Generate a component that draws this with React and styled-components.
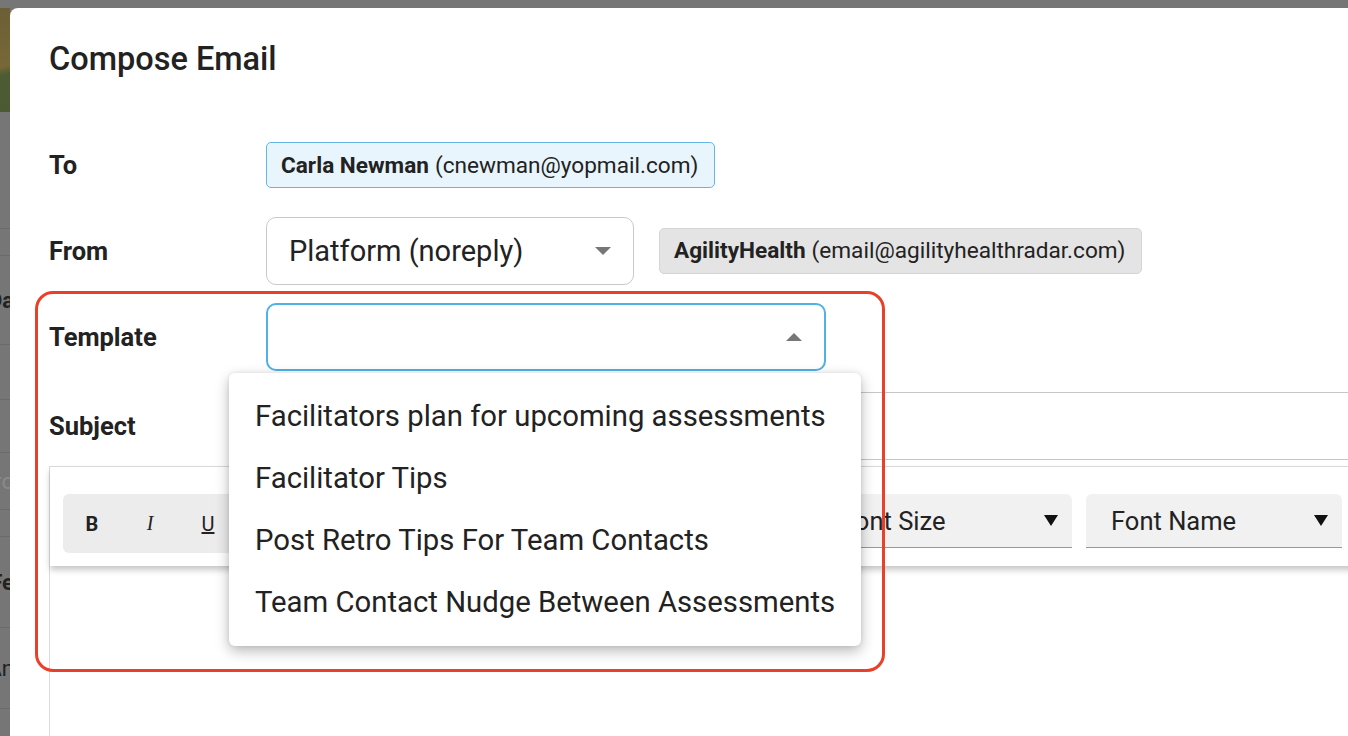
import React from 'react';
import styled, { createGlobalStyle, css } from 'styled-components';

const GlobalStyle = createGlobalStyle`
    html, body {
        margin: 0;
        padding: 0;
        height: 100%;
        overflow: hidden;
    }
    body {
        font-family: Roboto, "Noto Sans", "Liberation Sans", sans-serif;
        color: #222;
    }
`;

const Page = styled.div`
    display: flex;
    height: 736px;
    padding-top: 8px;
    box-sizing: border-box;
    background: #767676;
`;

const Backdrop = styled.div`
    width: 10px;
    flex-shrink: 0;
    overflow: hidden;
    display: flex;
    flex-direction: column;
`;

const BackdropInner = styled.div`
    width: 40px;
    margin-left: -26px;
    display: flex;
    flex-direction: column;
`;

const BackdropPhoto = styled.div`
    height: 104px;
    margin-left: 26px;
    background: linear-gradient(165deg, #6c5e36 0%, #786838 55%, #4e5c34 63%, #4a5a32 100%);
`;

const BackdropRow = styled.div`
    height: ${p => p.$h}px;
    border-bottom: 1px solid #6a6a6a;
    display: flex;
    align-items: center;
    justify-content: flex-end;
    font-size: 22px;
    font-weight: ${p => (p.$bold ? 700 : 400)};
    color: ${p => (p.$faint ? '#8a8a8a' : '#222')};
    white-space: nowrap;
`;

const Modal = styled.div`
    flex: 1;
    position: relative;
    background: #fff;
    border-top-left-radius: 8px;
    padding: 32px 0 0 39px;
    overflow: hidden;
`;

const Title = styled.h1`
    margin: 0;
    font-size: 32.5px;
    line-height: 38px;
    font-weight: 500;
    color: #222;
`;

const Form = styled.div`
    margin-top: 44px;
    display: flex;
    flex-direction: column;
`;

const Row = styled.div`
    display: flex;
    align-items: center;
    height: ${p => p.$h}px;
    margin-top: ${p => p.$mt || 0}px;
`;

const Label = styled.div`
    width: 217px;
    flex-shrink: 0;
    font-size: 25.5px;
    font-weight: 700;
    color: #222;
`;

const Field = styled.div`
    flex: 1;
    display: flex;
    align-items: center;
    gap: 25px;
    position: relative;
`;

const Chip = styled.div`
    display: inline-flex;
    align-items: center;
    height: 46px;
    box-sizing: border-box;
    padding: 0 16px 0 14px;
    border-radius: 5px;
    font-size: 22.6px;
    color: #222;
    white-space: nowrap;
    ${p => p.$tone === 'blue'
        ? css`
            background: #e8f5fc;
            border: 1px solid #63b6e6;
        `
        : css`
            background: #e4e4e4;
            border: 1px solid #d5d5d5;
        `}

    b {
        font-weight: 700;
        margin-right: 6px;
    }
`;

const Select = styled.div`
    width: ${p => p.$w}px;
    height: 68px;
    box-sizing: border-box;
    display: flex;
    align-items: center;
    justify-content: space-between;
    padding: 0 22px 0 22px;
    border-radius: 10px;
    background: #fff;
    font-size: 29px;
    color: #222;
    ${p => p.$focused
        ? css`border: 2px solid #4fb1e5;`
        : css`border: 1px solid #c9c9c9;`}
`;

const Caret = styled.span`
    width: 0;
    height: 0;
    border-left: 8px solid transparent;
    border-right: 8px solid transparent;
    ${p => p.$up
        ? css`border-bottom: 8px solid #777;`
        : css`border-top: 8px solid #777;`}
`;

const TemplateWrap = styled.div`
    position: relative;
`;

const Menu = styled.ul`
    position: absolute;
    top: calc(100% + 2px);
    left: -37px;
    width: 632px;
    margin: 0;
    padding: 12px 0 13px;
    list-style: none;
    background: #fff;
    border-radius: 6px;
    box-shadow: 0 5px 14px rgba(0, 0, 0, 0.28), 0 0 4px rgba(0, 0, 0, 0.08);
    z-index: 5;
`;

const MenuItem = styled.li`
    height: 62px;
    display: flex;
    align-items: center;
    padding-left: 26px;
    font-size: 29.3px;
    color: #222;
    white-space: nowrap;
`;

const SubjectInput = styled.div`
    flex: 1;
    height: 68px;
    margin-right: -40px;
    box-sizing: border-box;
    border: 1px solid #c6c6c6;
`;

const Editor = styled.div`
    margin-top: 6px;
    margin-right: -40px;
    height: 300px;
    border-left: 1px solid #dcdcdc;
    border-top: 1px solid #dcdcdc;
`;

const Toolbar = styled.div`
    display: flex;
    align-items: flex-start;
    gap: 14px;
    padding: 27px 0 13px 13px;
    background: #fff;
    box-shadow: 0 4px 6px rgba(0, 0, 0, 0.22);
`;

const ButtonGroup = styled.div`
    width: 739px;
    height: 59px;
    display: flex;
    align-items: center;
    background: #ececec;
    border-radius: 6px;
`;

const ToolButton = styled.span`
    width: 58px;
    text-align: center;
    font-size: 20px;
    color: #222;
    font-weight: ${p => (p.$bold ? 700 : 400)};
    font-style: ${p => (p.$italic ? 'italic' : 'normal')};
    text-decoration: ${p => (p.$underline ? 'underline' : 'none')};
    font-family: ${p => (p.$italic ? '"Liberation Serif", serif' : 'inherit')};
`;

const FontSelect = styled.div`
    width: 256px;
    height: 54px;
    box-sizing: border-box;
    display: flex;
    align-items: center;
    justify-content: space-between;
    padding: 0 14px 0 25px;
    background: #f1f1f1;
    border-bottom: 1px solid #999;
    border-radius: 6px 6px 0 0;
    font-size: 25.5px;
    color: #222;
`;

const BlackCaret = styled.span`
    width: 0;
    height: 0;
    border-left: 7px solid transparent;
    border-right: 7px solid transparent;
    border-top: 11px solid #111;
`;

const Highlight = styled.div`
    position: absolute;
    left: 25px;
    top: 283px;
    width: 850px;
    height: 381px;
    box-sizing: border-box;
    border: 3px solid #e8402a;
    border-radius: 18px;
    pointer-events: none;
    z-index: 10;
`;

const templates = [
    'Facilitators plan for upcoming assessments',
    'Facilitator Tips',
    'Post Retro Tips For Team Contacts',
    'Team Contact Nudge Between Assessments',
];

const App = () => {
    return (
        <>
            <GlobalStyle />
            <Page>
                <Backdrop>
                    <BackdropInner>
                        <BackdropPhoto />
                        <BackdropRow $h={116} />
                        <BackdropRow $h={26} />
                        <BackdropRow $h={88} $bold>Da</BackdropRow>
                        <BackdropRow $h={54} />
                        <BackdropRow $h={52} />
                        <BackdropRow $h={56} $faint>Pro</BackdropRow>
                        <BackdropRow $h={26} />
                        <BackdropRow $h={90} $bold>Fe</BackdropRow>
                        <BackdropRow $h={80}>An</BackdropRow>
                    </BackdropInner>
                </Backdrop>
                <Modal>
                    <Title>Compose Email</Title>
                    <Form>
                        <Row $h={86}>
                            <Label>To</Label>
                            <Field>
                                <Chip $tone="blue"><b>Carla Newman</b>(cnewman@yopmail.com)</Chip>
                            </Field>
                        </Row>
                        <Row $h={85}>
                            <Label>From</Label>
                            <Field>
                                <Select $w={368}>
                                    <span>Platform (noreply)</span>
                                    <Caret />
                                </Select>
                                <Chip $tone="gray"><b>AgilityHealth</b>(email@agilityhealthradar.com)</Chip>
                            </Field>
                        </Row>
                        <Row $h={87}>
                            <Label>Template</Label>
                            <Field>
                                <TemplateWrap>
                                    <Select $w={560} $focused>
                                        <span />
                                        <Caret $up />
                                    </Select>
                                    <Menu>
                                        {templates.map(t => (
                                            <MenuItem key={t}>{t}</MenuItem>
                                        ))}
                                    </Menu>
                                </TemplateWrap>
                            </Field>
                        </Row>
                        <Row $h={68} $mt={12}>
                            <Label>Subject</Label>
                            <SubjectInput />
                        </Row>
                    </Form>
                    <Editor>
                        <Toolbar>
                            <ButtonGroup>
                                <ToolButton $bold>B</ToolButton>
                                <ToolButton $italic>I</ToolButton>
                                <ToolButton $underline>U</ToolButton>
                            </ButtonGroup>
                            <FontSelect>
                                <span>Font Size</span>
                                <BlackCaret />
                            </FontSelect>
                            <FontSelect>
                                <span>Font Name</span>
                                <BlackCaret />
                            </FontSelect>
                        </Toolbar>
                    </Editor>
                    <Highlight />
                </Modal>
            </Page>
        </>
    );
};

export default App;
